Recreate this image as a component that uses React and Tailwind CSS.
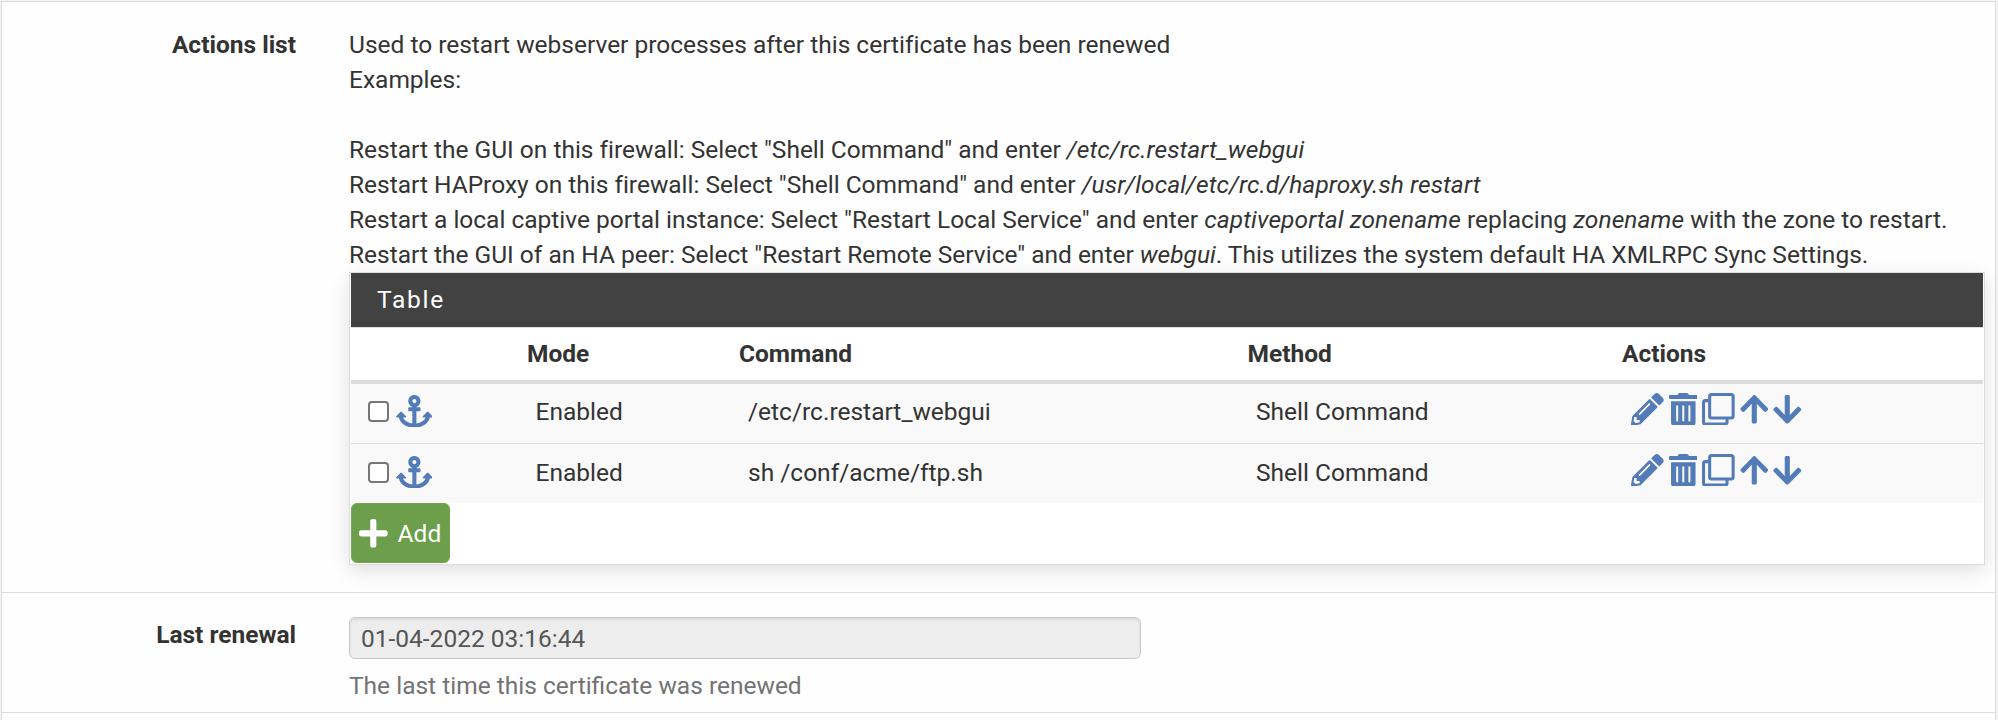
import React from "react";
import {
  FaAnchor,
  FaArrowDown,
  FaArrowUp,
  FaPencilAlt,
  FaPlus,
  FaRegClone,
  FaTrashAlt,
} from "react-icons/fa";

const rows = [
  { mode: "Enabled", command: "/etc/rc.restart_webgui", method: "Shell Command" },
  { mode: "Enabled", command: "sh /conf/acme/ftp.sh", method: "Shell Command" },
];

const columns = "grid grid-cols-[168px_212px_508px_375px_1fr]";

function Label({ children }) {
  return <div className="w-[294px] shrink-0 text-right font-bold">{children}</div>;
}

function Code({ children }) {
  return <i className="tracking-[0.09px]">{children}</i>;
}

function ActionRow({ row, last }) {
  return (
    <div
      className={`${columns} ${last ? "h-[59px] pt-[11px]" : "h-[60px] border-b pt-[10px]"} border-[#dcdcdc] bg-[#f9f9f9]`}
    >
      <div className="flex pl-[17px]">
        <input
          type="checkbox"
          className="mt-[7px] h-[21px] w-[21px] appearance-none rounded-[4px] border-2 border-[#767676] bg-white"
        />
        <FaAnchor className="mt-[0.7px] ml-[6.5px] h-[32.67px] w-[36.75px] text-[#527bb8]" />
      </div>
      <div className="pl-[16.5px]">{row.mode}</div>
      <div className="pl-[17px]">{row.command}</div>
      <div className="pl-[17px]">{row.method}</div>
      <div className="-mt-[1.33px] flex gap-[4.95px] pl-[17px] text-[#527bb8]">
        <FaPencilAlt className="h-[32.67px] w-[32.67px]" />
        <FaTrashAlt className="h-[32.67px] w-[28.58px]" />
        <FaRegClone className="h-[32.67px] w-[32.67px]" />
        <FaArrowUp className="h-[32.67px] w-[28.58px]" />
        <FaArrowDown className="h-[32.67px] w-[28.58px]" />
      </div>
    </div>
  );
}

export default function App() {
  return (
    <div className="h-[720px] w-[1998px] overflow-hidden bg-[#f3f3f3] pt-px pr-[2px] pl-px font-[Roboto,sans-serif] text-[24.5px] leading-[35px] text-[#333]">
      <div className="h-full border-x border-t border-[#dcdcdc] bg-[#fefefe]">
        <section className="flex h-[591px] border-b border-[#dcdcdc] pt-[25px]">
          <Label>Actions list</Label>
          <div className="ml-[53px] w-[1636px] shrink-0">
            <div className="whitespace-nowrap tracking-[-0.008px]">
              <p>Used to restart webserver processes after this certificate has been renewed</p>
              <p>Examples:</p>
              <p className="h-[35px]" />
              <p>
                Restart the GUI on this firewall: Select "Shell Command" and enter{" "}
                <Code>/etc/rc.restart_webgui</Code>
              </p>
              <p>
                Restart HAProxy on this firewall: Select "Shell Command" and enter{" "}
                <Code>/usr/local/etc/rc.d/haproxy.sh restart</Code>
              </p>
              <p>
                Restart a local captive portal instance: Select "Restart Local Service" and enter{" "}
                <Code>captiveportal zonename</Code> replacing <Code>zonename</Code> with the zone to restart.
              </p>
              <p>
                Restart the GUI of an HA peer: Select "Restart Remote Service" and enter{" "}
                <i>webgui</i>. This utilizes the system default HA XMLRPC Sync Settings.
              </p>
            </div>
            <div className="h-[293px] border border-[#dcdcdc] bg-white px-px shadow-[0_6px_18px_rgba(0,0,0,0.12)]">
              <h2 className="h-[54px] bg-[#424242] pt-[9px] pl-[26px] tracking-[1.75px] text-white">
                Table
              </h2>
              <div className={`${columns} h-[57px] border-t border-b-4 border-t-[#dcdcdc] border-b-[#dcdcdc] pt-[8px] font-bold`}>
                <div />
                <div className="pl-[8px]">Mode</div>
                <div className="pl-[8px]">Command</div>
                <div className="pl-[8.5px]">Method</div>
                <div className="pl-[8px]">Actions</div>
              </div>
              <ActionRow row={rows[0]} />
              <ActionRow row={rows[1]} last />
              <button className="flex h-[60px] w-[99px] items-center rounded-[6px] border border-[#71a84c] bg-[#6c9e4b] pl-[7px] text-white">
                <FaPlus className="h-[32.67px] w-[28.58px]" />
                <span className="ml-[10px]">Add</span>
              </button>
            </div>
          </div>
        </section>
        <section className="flex h-[120px] border-b border-[#dcdcdc] pt-[24px]">
          <Label>
            <span className="block leading-[36px]">Last renewal</span>
          </Label>
          <div className="ml-[53px]">
            <input
              readOnly
              value="01-04-2022 03:16:44"
              className="block h-[42px] w-[792px] rounded-[6px] border border-[#c8c8c8] bg-[#ededed] px-[11px] text-[#555] shadow-[inset_0_2px_2px_rgba(0,0,0,0.075)]"
            />
            <p className="mt-[9px] text-[#737373]">The last time this certificate was renewed</p>
          </div>
        </section>
      </div>
    </div>
  );
}
